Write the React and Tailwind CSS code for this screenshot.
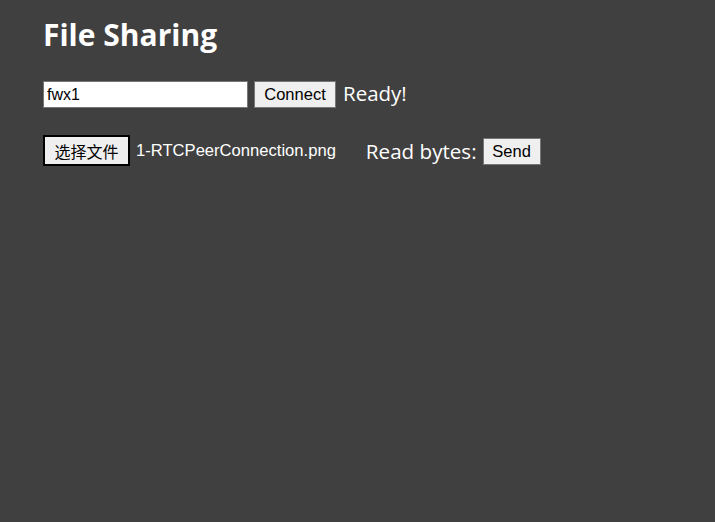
// File sharing demo page: peer id + connect, file picker, read progress, send.
import { useState } from "react";

export default function App() {
  const [peer, setPeer] = useState("fwx1");

  return (
    <div className="min-h-[522px] bg-[#404040] px-[43px] pt-[13px] text-white font-['Open_Sans','Noto_Sans',sans-serif]">
      <h1 className="text-[30px] font-bold leading-[44px]">File Sharing</h1>

      <div className="mt-[24px] flex items-center">
        <input
          className="h-[27px] w-[205px] border border-[#767676] bg-white px-[3px] text-[16px] text-black font-['Liberation_Sans',Arial,sans-serif] outline-none"
          value={peer}
          onChange={(e) => setPeer(e.target.value)}
        />
        <button className="ml-[6px] h-[27px] w-[82px] border border-[#767676] bg-[#efefef] text-[16.5px] text-black font-['Liberation_Sans',Arial,sans-serif]">
          Connect
        </button>
        <span className="ml-[7px] text-[20.5px] leading-[24px] -mt-[4px]">Ready!</span>
      </div>

      <div className="mt-[27px] flex items-center">
        <button className="h-[31px] w-[87px] border-2 border-black bg-[#efefef] text-[16px] text-black font-['Noto_Sans_CJK_SC',sans-serif] leading-none">
          选择文件
        </button>
        <span className="ml-[6px] mt-[2px] text-[16.6px] font-['Liberation_Sans',Arial,sans-serif]">1-RTCPeerConnection.png</span>
        <span className="ml-[30px] text-[20.6px] leading-[24px]">Read bytes:</span>
        <button className="ml-[6px] mt-[1px] h-[27px] w-[58px] border border-[#767676] bg-[#efefef] text-[16.5px] text-black font-['Liberation_Sans',Arial,sans-serif]">
          Send
        </button>
      </div>
    </div>
  );
}
